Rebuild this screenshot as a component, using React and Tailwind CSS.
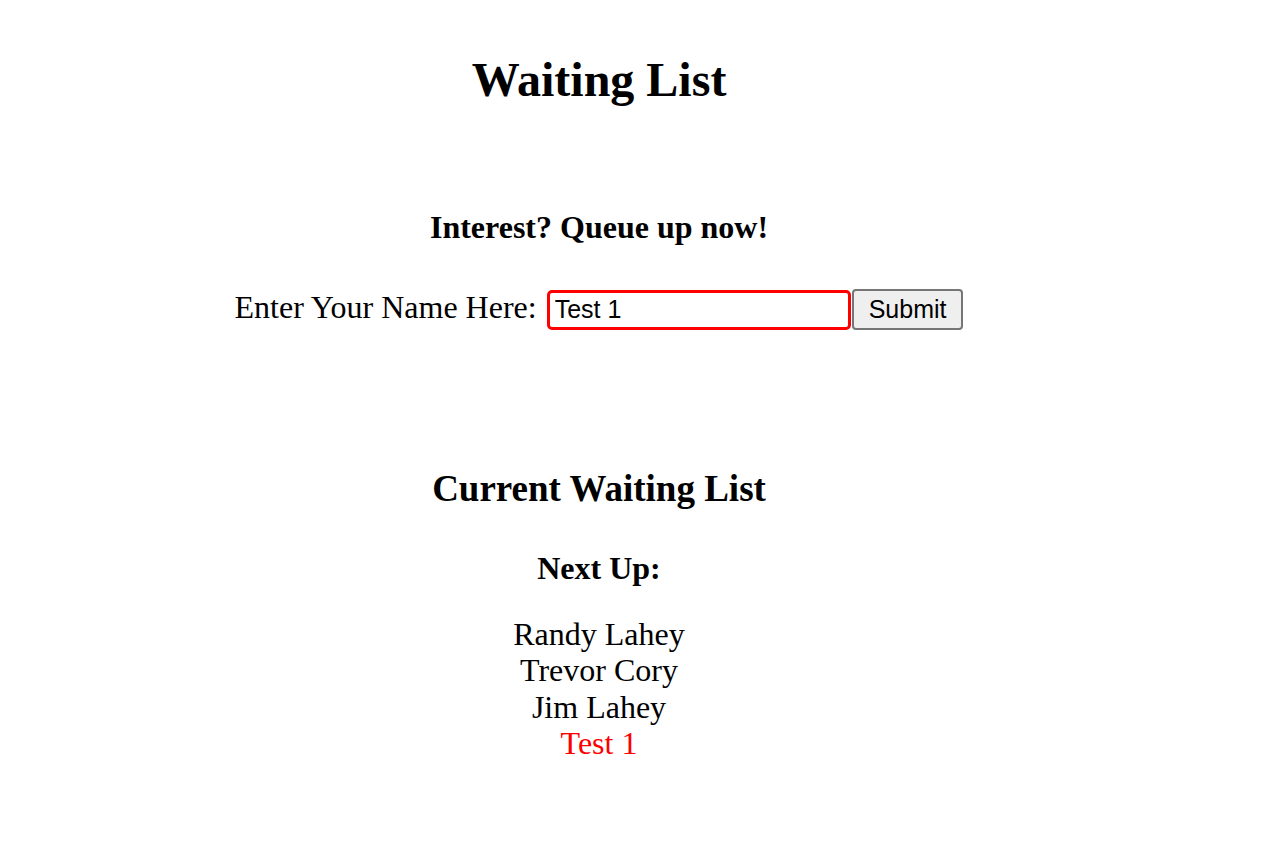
import { useState } from 'react'

export default function App(){
  const [name, setName] = useState('Test 1')
  const queue = ['Randy Lahey', 'Trevor Cory', 'Jim Lahey']

  return (
    <div className="w-[1198px] bg-white text-black text-center" style={{ fontFamily: '"Liberation Serif", "Times New Roman", serif' }}>
      <h1 className="pt-[52px] text-[48px] leading-[56px] font-bold">Waiting List</h1>

      <h3 className="mt-[101px] text-[32px] leading-[36px] font-bold">Interest? Queue up now!</h3>

      <form onSubmit={e=>e.preventDefault()} className="mt-[44px] flex items-baseline justify-center">
        <label className="text-[32px] leading-[36px] mr-[10px]">Enter Your Name Here:</label>
        <input
          className="w-[304px] h-[40px] border-[3px] border-[#ff0000] rounded-[5px] pl-[5px] text-[25px] outline-none"
          style={{ fontFamily: '"Liberation Sans", Arial, sans-serif' }}
          value={name}
          onChange={e=>setName(e.target.value)}
        />
        <button
          className="ml-[1px] px-[15px] py-[4px] border-2 border-[#767676] rounded-[4px] bg-[#efefef] text-[25px] leading-[29px]"
          style={{ fontFamily: '"Liberation Sans", Arial, sans-serif' }}
        >Submit</button>
      </form>

      <h2 className="mt-[138px] text-[37px] leading-[42px] font-bold">Current Waiting List</h2>

      <h3 className="mt-[40px] text-[32px] leading-[36px] font-bold">Next Up:</h3>

      <div className="mt-[30px] text-[32px] leading-[36.3px] pb-[80px]">
        {queue.map(q => <div key={q}>{q}</div>)}
        <div className="text-[#ff0000]">{name}</div>
      </div>
    </div>
  )
}
